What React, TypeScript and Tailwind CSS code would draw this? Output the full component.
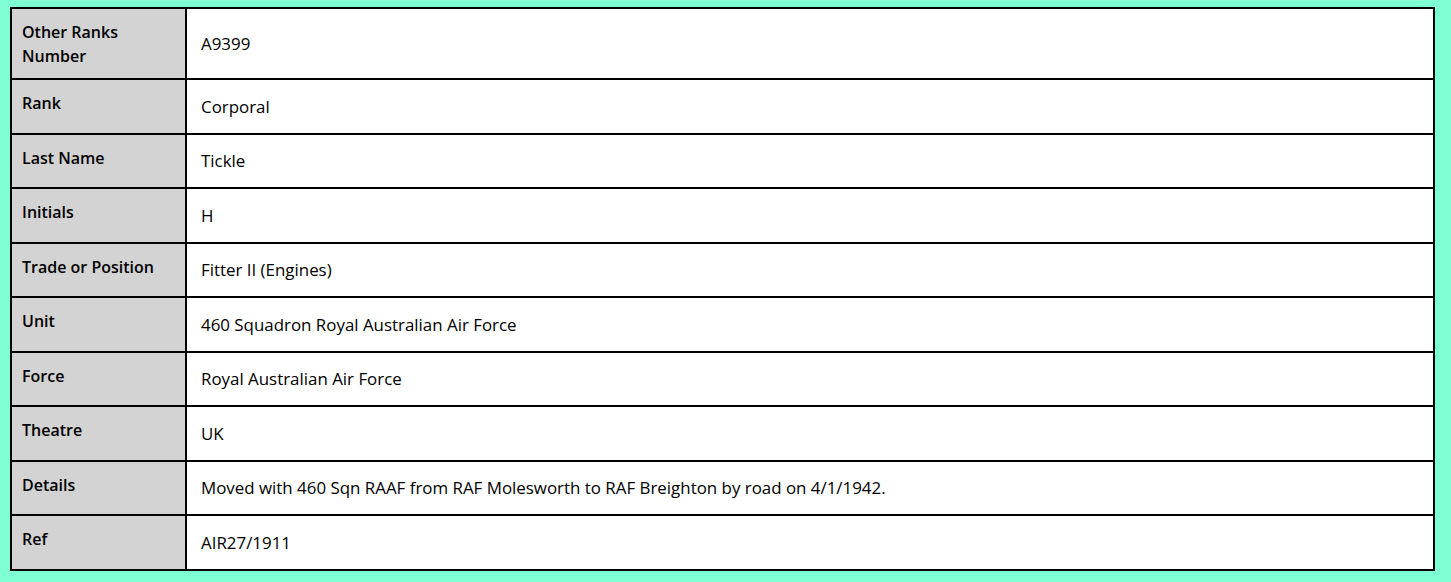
const rows: [string, string][] = [
  ['Other Ranks Number', 'A9399'],
  ['Rank', 'Corporal'],
  ['Last Name', 'Tickle'],
  ['Initials', 'H'],
  ['Trade or Position', 'Fitter II (Engines)'],
  ['Unit', '460 Squadron Royal Australian Air Force'],
  ['Force', 'Royal Australian Air Force'],
  ['Theatre', 'UK'],
  ['Details', 'Moved with 460 Sqn RAAF from RAF Molesworth to RAF Breighton by road on 4/1/1942.'],
  ['Ref', 'AIR27/1911'],
];

export default function App() {
  return (
    <div className="min-h-[582px] w-full bg-[#7fffd4] pl-[10px] pt-[7px] font-['Open_Sans',sans-serif] text-black">
      <table className="w-[1425px] border-collapse border-2 border-black bg-white">
        <tbody>
          {rows.map(([label, value]) => (
            <tr key={label}>
              <th className="w-[175px] border-2 border-black bg-[#d3d3d3] px-[10px] pt-[11px] pb-[10px] text-left align-top text-[16px] font-semibold leading-[24px]">
                {label === 'Other Ranks Number' ? (
                  <>
                    Other Ranks
                    <br />
                    Number
                  </>
                ) : (
                  label
                )}
              </th>
              <td className="border-2 border-black pl-[14px] pr-[14px] pt-[14.5px] pb-[14px] align-middle text-[16.9px] leading-[24px]">
                {value}
              </td>
            </tr>
          ))}
        </tbody>
      </table>
    </div>
  );
}
